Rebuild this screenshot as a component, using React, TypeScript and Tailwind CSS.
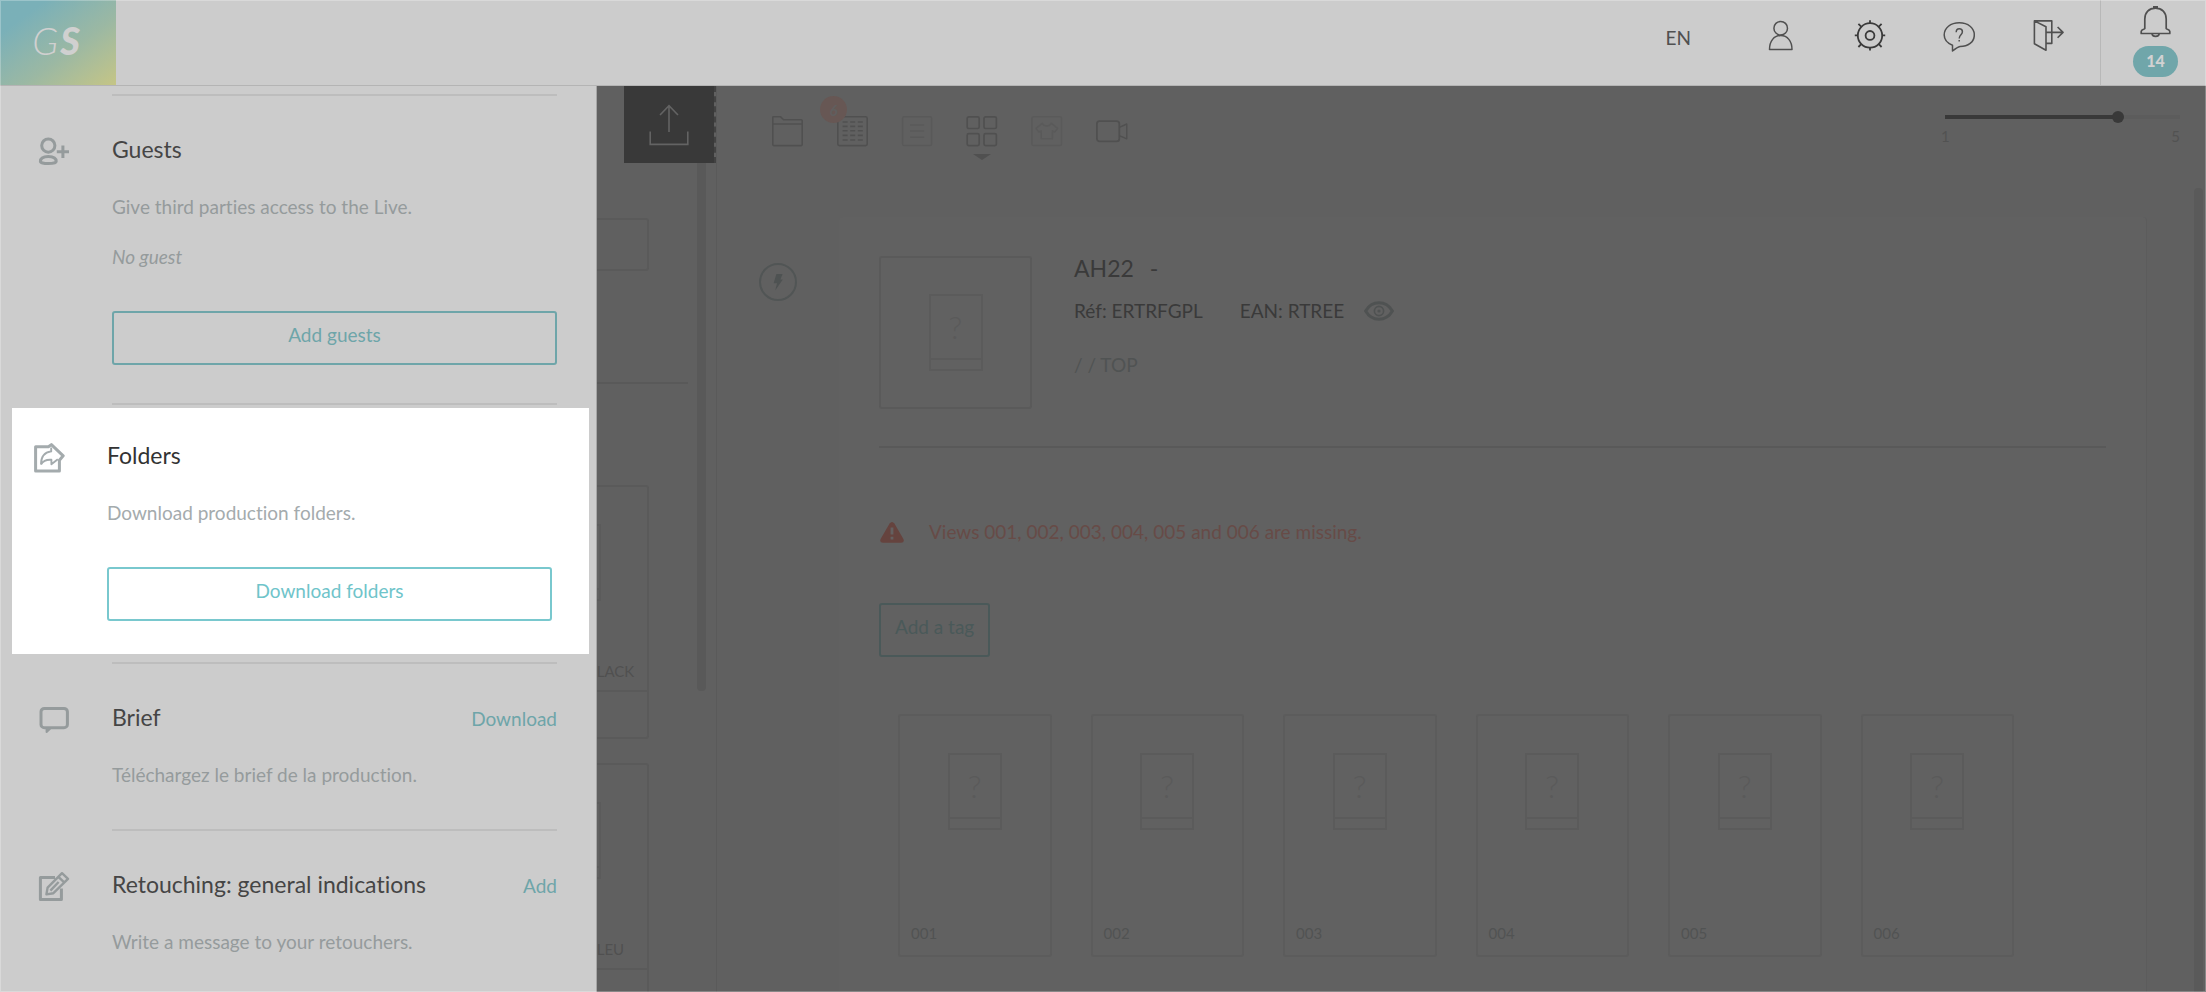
import React from "react";

type IconProps = { className?: string; children: React.ReactNode; width?: number };

function Icon({ className = "", children, width = 2 }: IconProps) {
  return (
    <svg
      viewBox="0 0 32 32"
      className={`size-8 shrink-0 ${className}`}
      fill="none"
      stroke="currentColor"
      strokeWidth={width}
      strokeLinejoin="round"
      aria-hidden="true"
    >
      {children}
    </svg>
  );
}

function Header() {
  return (
    <header className="flex h-[86px] shrink-0 border-b border-[#b4b4b4] bg-[#cccccc] text-[#505050]">
      <a
        href="#home"
        aria-label="Home"
        className="flex w-[116px] items-center justify-center gap-[2px] bg-linear-to-br from-[#7ab0b8] from-20% via-[#9bb8a3] via-60% to-[#c5c585] pr-1 pb-[6px] text-[38px] leading-none text-[#d0d0d0] italic"
      >
        <span className="font-light">G</span>
        <span className="font-black">S</span>
      </a>
      <nav className="ml-auto flex items-start">
        <button type="button" className="mt-6 text-[19px] leading-7">
          EN
        </button>
        <div className="mt-5 mr-9 ml-[74px] flex gap-[57px]">
          <button type="button" aria-label="Account">
            <Icon width={1.5}>
              <circle cx="15.7" cy="8.2" r="6.8" />
              <path d="M4.5 29.5C4.5 21 9 15.6 15.7 15.6S27 21 27 29.5Z" />
            </Icon>
          </button>
          <button type="button" aria-label="Settings" className="text-[#3a3a3a]">
            <Icon width={1.8}>
              <circle cx="16" cy="15.4" r="12.2" />
              <circle cx="16" cy="15.4" r="4.4" />
              <path d="M16 .2v3M16 27.6v3M.8 15.4h3M28.2 15.4h3M4.4 3.8l2.8 2.8M24.8 24.2l2.8 2.8M27.6 3.8l-2.8 2.8M7.2 24.2l-2.8 2.8" />
            </Icon>
          </button>
          <button type="button" aria-label="Help">
            <Icon width={1.5}>
              <path d="M9.5 31V25.2C4 23 1.2 19.5 1.2 15 1.2 8 7.5 2.8 16.3 2.8S31.3 8 31.3 15 25 26.4 17 26.4Q14.5 26.8 9.5 31Z" />
              <path d="M13.2 12.3c0-2.3 1.3-3.5 3.1-3.5s3.1 1.2 3.1 3c0 2.9-3.2 3-3.2 6.6M16.2 20v1.6" />
            </Icon>
          </button>
          <button type="button" aria-label="Log out">
            <Icon width={1.6}>
              <path d="M2.4.9H19.8V23.4H14M2.4.9 14 6.8V30.2L2.4 23.8ZM14 12.4H31M25.6 7l5.4 5.4-5.4 5.4" />
            </Icon>
          </button>
        </div>
        <button
          type="button"
          aria-label="Notifications, 14 unread"
          className="flex h-[85px] w-[106px] flex-col items-center border-l border-[#b8b8b8] pt-1 pl-1"
        >
          <svg viewBox="0 0 31 34" className="h-[34px] w-[31px]" fill="none" stroke="currentColor" strokeWidth="1.7" strokeLinejoin="round" aria-hidden="true">
            <path d="M4.8 24.6V15C4.8 8.5 9 4.2 15.5 4.2S26.2 8.5 26.2 15v9.6c.5.8 3.6.6 3.6 2.9V29.5H1.2V27.5c0-2.3 3.1-2.1 3.6-2.9ZM12 29.5a3.6 2.8 0 0 0 7.2 0M13 2.8h5" />
          </svg>
          <span className="mt-2 flex h-[31px] w-[45px] items-center justify-center rounded-full bg-[#70a6aa] pb-px text-[16px] leading-5 font-black text-[#d2d2d2]">
            14
          </span>
        </button>
      </nav>
    </header>
  );
}

function Rule() {
  return <div className="mr-[39px] ml-[112px] h-[2px] shrink-0 bg-[#bdbdbd]" />;
}

type SectionProps = {
  icon: React.ReactNode;
  title: string;
  text: string;
  action?: string;
  className: string;
  children?: React.ReactNode;
};

function Section({ icon, title, text, action, className, children }: SectionProps) {
  return (
    <section className={`flex shrink-0 ${className}`}>
      <div className="w-[74px] shrink-0 pt-1">{icon}</div>
      <div className="min-w-0 flex-1">
        <div className="flex items-baseline justify-between">
          <h2 className="text-[23px] leading-8">{title}</h2>
          {action && (
            <button type="button" className="text-[19px] leading-7 text-[#6ea5a9]">
              {action}
            </button>
          )}
        </div>
        <p className="mt-7 text-[19px] leading-7">{text}</p>
        {children}
      </div>
    </section>
  );
}

function Drawer() {
  return (
    <aside className="flex w-[597px] shrink-0 flex-col overflow-hidden border-r border-[#a6a6a6] bg-[#cccccc] pt-2 text-[#959b9c]">
      <Rule />
      <Section
        className="pt-[37px] pr-[39px] pb-[38px] pl-[38px] [&_h2]:text-[#454545]"
        title="Guests"
        text="Give third parties access to the Live."
        icon={
          <Icon width={3}>
            <circle cx="10.3" cy="8.6" r="6.6" />
            <path d="M2.4 24.5c0-3.2 3.2-5 7.9-5s7.9 1.8 7.9 5c0 1.2-3.2 2-7.9 2s-7.9-.8-7.9-2ZM18.8 14.8H31M24.9 8.6V21" />
          </Icon>
        }
      >
        <p className="mt-[22px] text-[19px] leading-7 italic">No guest</p>
        <button
          type="button"
          className="mt-10 flex h-[54px] w-full items-center justify-center rounded-[3px] border-2 border-[#6ea5a9] pb-[6px] text-[19px] leading-7 text-[#6ea5a9]"
        >
          Add guests
        </button>
      </Section>
      <Rule />
      <Section
        className="mt-[3px] mr-[7px] mb-2 ml-3 bg-white pt-[31px] pr-[37px] pb-[33px] pl-[21px] text-[#a4abad] [&_h2]:text-[#333333]"
        title="Folders"
        text="Download production folders."
        icon={
          <Icon width={3}>
            <path d="M2.6 3.8H15.4L18.4 1.6 30.2 12.8 26.4 17.2V28H2.6Z" />
            <path
              strokeWidth="1.9"
              d="M8 21.4C8 13.4 11.6 9.2 18.2 8.4V4.4M8 21.4c2.2-3.6 5.6-5 10.4-4.6v4.4l6.4-5"
            />
          </Icon>
        }
      >
        <button
          type="button"
          className="mt-10 flex h-[54px] w-full items-center justify-center rounded-[3px] border-2 border-[#79c8ce] pb-[6px] text-[19px] leading-7 text-[#6fc4ca]"
        >
          Download folders
        </button>
      </Section>
      <Rule />
      <Section
        className="pt-[37px] pr-[39px] pb-10 pl-[38px] [&_h2]:text-[#454545]"
        title="Brief"
        text="Téléchargez le brief de la production."
        action="Download"
        icon={
          <Icon width={3}>
            <rect x="3" y="3.4" width="26.4" height="19.4" rx="3.4" />
            <path d="M8.6 23.8v3.2l3.4-3.2Z" strokeWidth="2" fill="currentColor" />
          </Icon>
        }
      />
      <Rule />
      <Section
        className="pt-[37px] pr-[39px] pb-10 pl-[38px] [&_h2]:text-[#454545]"
        title="Retouching: general indications"
        text="Write a message to your retouchers."
        action="Add"
        icon={
          <Icon width={3}>
            <path d="M17 5.600H2.400V27.400H23.400V16.400" />
            <path d="M9.600 15.600 24 1.200 30 6.800 15.400 21.200 8.400 22.400ZM20.400 4.800l5.800 5.600M12.400 18.600 20.600 10" strokeWidth="2.400" />
          </Icon>
        }
      />
    </aside>
  );
}

function Placeholder({ mark = "?" }: { mark?: string }) {
  return (
    <div className="flex h-[77px] w-[54px] shrink-0 flex-col border-2 border-[#5b5b5b] text-[#5a5a5a]">
      <div className="flex flex-1 items-center justify-center border-b-2 border-[#5b5b5b] text-[32px] leading-none font-light">{mark}</div>
      <div className="h-[9px]" />
    </div>
  );
}

function StripCard({ color }: { color: string }) {
  return (
    <div className="mr-[39px] flex h-[254px] w-[150px] shrink-0 flex-col items-center rounded-[3px] border-2 border-[#5a5a5a] pt-[37px]">
      <Placeholder mark="" />
      <p className="mt-[60px] w-full pl-[86px]">{color}</p>
      <div className="mt-[9px] h-[2px] w-full bg-[#5a5a5a]" />
    </div>
  );
}

function ProductStrip() {
  return (
    <div className="flex w-[120px] shrink-0 flex-col items-end overflow-hidden border-r border-[#5a5a5a] text-[15px] leading-5 text-[#505050]">
      <button
        type="button"
        aria-label="Upload"
        className="flex h-[77px] w-[92px] shrink-0 items-center justify-center border-r-2 border-dashed border-[#424242] bg-[#393939] bg-clip-padding text-[#636363]"
      >
        <svg viewBox="0 0 40 42" className="h-[42px] w-10" fill="none" stroke="currentColor" strokeWidth="1.6" aria-hidden="true">
          <path d="M1.2 27.4V40.4H38.8V27.4M20 28V1.6M11 11 20 1.6 29 11" />
        </svg>
      </button>
      <div className="flex min-h-0 flex-1 items-start gap-[9px] pr-[10px]">
        <div className="flex flex-col items-end">
          <div className="mt-[55px] mr-[39px] h-[53px] w-[150px] rounded-[3px] border-2 border-[#5a5a5a]" />
          <div className="mt-[111px] mb-[101px] h-[2px] w-[190px] bg-[#595959]" />
          <StripCard color="BLACK" />
          <div className="h-6" />
          <StripCard color="BLEU" />
        </div>
        <div className="h-[528px] w-[9px] shrink-0 rounded-b bg-[#595959]" />
      </div>
    </div>
  );
}

function Toolbar() {
  return (
    <div className="flex h-[131px] shrink-0 items-start justify-between pt-[25px] pr-[26px] pl-[54px] text-[#505050]">
      <div className="mt-[5px] flex gap-[33px]">
        <button type="button" aria-label="Folders">
          <Icon width={1.6}>
            <path d="M1.8 1.6q0-1 1-1H9.4l3.2 3.2H30.2q1 0 1 1V28.6q0 1-1 1H2.8q-1 0-1-1ZM1.8 8H31.2" />
          </Icon>
        </button>
        <button type="button" aria-label="Table, 6 alerts" className="relative">
          <Icon width={1.6}>
            <rect x="1.8" y=".8" width="29.4" height="28.8" rx="1.6" />
            <path d="M6.600 6h5M14.200 6h5M21.800 6h5M6.600 10.400h5M14.200 10.400h5M21.800 10.400h5M6.600 14.800h5M14.200 14.800h5M21.800 14.800h5M6.600 19.400h5M14.200 19.400h5M21.800 19.400h5M6.600 24h5M14.200 24h5M21.800 24h5" />
          </Icon>
          <span className="absolute -top-5 -left-4 flex size-[27px] items-center justify-center rounded-full bg-[#675754] text-[15px] leading-5 font-bold text-[#605f5f] italic">
            6
          </span>
        </button>
        <button type="button" aria-label="List" className="text-[#595959]">
          <Icon width={1.5}>
            <rect x="1.6" y=".8" width="29" height="28.8" rx="1.6" />
            <path d="M9.2 9h14M9.2 15h14M9.2 21.2h14" />
          </Icon>
        </button>
        <button type="button" aria-label="Grid" className="relative">
          <Icon width={1.7}>
            <rect x="1.2" y=".9" width="12" height="11.6" rx="1.6" />
            <rect x="18" y=".9" width="12.4" height="11.6" rx="1.6" />
            <rect x="1.2" y="17.6" width="12" height="12" rx="1.6" />
            <rect x="18" y="17.6" width="12.4" height="12" rx="1.6" />
          </Icon>
          <svg viewBox="0 0 18 6" className="absolute top-[38px] left-[7px] h-[6px] w-[18px] fill-current" aria-hidden="true">
            <path d="M0 0H18L9 6Z" />
          </svg>
        </button>
        <button type="button" aria-label="Garments" className="text-[#5a5a5a]">
          <Icon width={1.5}>
            <rect x=".9" y=".8" width="29.6" height="28.8" rx="1.6" />
            <path d="M11.400 7.200 5 12.400 7.800 16l2.400-1.200v8h11.200v-8l2.400 1.200 2.800-3.600L20.200 7.200Q19 10 15.800 10T11.400 7.200Z" />
          </Icon>
        </button>
        <button type="button" aria-label="Video">
          <Icon width={1.8}>
            <rect x=".9" y="5.2" width="22.4" height="20.2" rx="2.6" />
            <path d="M23.3 11.4 30.8 8V22.8L23.3 19.6" strokeWidth="1.4" />
          </Icon>
        </button>
      </div>
      <div className="w-[239px]">
        <input
          type="range"
          min={1}
          max={5}
          defaultValue={4}
          aria-label="Items per row"
          className="ml-1 block h-3 w-[235px] appearance-none bg-[linear-gradient(90deg,#393939_75%,#5c5c5c_75%)] bg-[length:100%_4px] bg-center bg-no-repeat [&::-webkit-slider-thumb]:size-3 [&::-webkit-slider-thumb]:appearance-none [&::-webkit-slider-thumb]:rounded-full [&::-webkit-slider-thumb]:bg-[#393939]"
        />
        <div className="mt-[3px] flex justify-between text-[15px] leading-5 text-[#525252]">
          <span>1</span>
          <span>5</span>
        </div>
      </div>
    </div>
  );
}

const views = ["001", "002", "003", "004", "005", "006"];

function ProductCard() {
  return (
    <article className="mr-[59px] flex-1 rounded-t-sm border-r border-[#5c5c5c] bg-[#616161] px-10 pt-[39px]">
      <div className="flex gap-[42px]">
        <div className="flex size-[153px] shrink-0 items-center justify-center rounded-[3px] border-2 border-[#5a5a5a]">
          <Placeholder />
        </div>
        <div className="text-[#3a3a3a]">
          <h1 className="flex gap-4 text-[23px] leading-6">
            <span>AH22</span>
            <span>-</span>
          </h1>
          <div className="mt-[17px] flex items-center text-[19px] leading-7">
            <span>Réf: ERTRFGPL</span>
            <span className="ml-[37px]">EAN: RTREE</span>
            <button type="button" aria-label="Show details" className="ml-5 text-[#4f5252]">
              <svg viewBox="0 0 30 20" className="h-5 w-[30px]" fill="none" stroke="currentColor" aria-hidden="true">
                <path d="M1.600 10C5 4.200 9.600 1.800 15 1.800S25 4.200 28.400 10C25 15.800 20.400 18.200 15 18.200S5 15.800 1.600 10Z" strokeWidth="3" />
                <circle cx="15" cy="10" r="4.600" strokeWidth="1.600" />
                <circle cx="15" cy="10" r="1.600" fill="currentColor" stroke="none" />
              </svg>
            </button>
          </div>
          <p className="mt-[26px] text-[19px] leading-7 text-[#505353]">/ / TOP</p>
        </div>
      </div>
      <div className="mt-[37px] h-[2px] bg-[#595959]" />
      <div className="mt-[70px] flex items-center gap-[25px] pl-px text-[19px] leading-7 text-[#674b47]">
        <svg viewBox="0 0 24 21" className="h-[21px] w-6" aria-hidden="true">
          <path d="M9.600 1.600Q12-1.400 14.400 1.600L23.400 17Q24.800 20.600 21 20.800H3Q-.8 20.600.6 17Z" fill="#65433e" />
          <path d="M12 5.600V12.400M12 14.800V17.600" stroke="#646060" strokeWidth="2.800" />
        </svg>
        <p>Views 001, 002, 003, 004, 005 and 006 are missing.</p>
      </div>
      <button
        type="button"
        className="mt-[57px] flex h-[54px] items-center justify-center rounded-[3px] border-2 border-[#4a5959] px-[14px] pb-[6px] text-[19px] leading-7 text-[#4a5959]"
      >
        Add a tag
      </button>
      <ul className="mt-[57px] mr-[92px] ml-[19px] grid grid-cols-6 gap-[39px]">
        {views.map((view) => (
          <li key={view} className="flex h-[243px] flex-col items-center rounded-[3px] border-2 border-[#5c5c5c] pt-[37px] pb-3">
            <Placeholder />
            <p className="mt-auto w-full pl-[11px] text-[15px] leading-5 text-[#515353]">{view}</p>
          </li>
        ))}
      </ul>
    </article>
  );
}

export default function App() {
  return (
    <div className="relative flex h-screen flex-col overflow-hidden bg-[#606060] font-['Lato',sans-serif] [font-variant-ligatures:none]">
      <Header />
      <div className="flex min-h-0 flex-1">
        <Drawer />
        <ProductStrip />
        <main className="relative flex min-w-0 flex-1 flex-col overflow-hidden">
          <Toolbar />
          <div className="flex flex-1">
            <div className="flex w-[122px] shrink-0 items-start justify-center pt-[46px]">
              <button
                type="button"
                aria-label="Quick actions"
                className="flex size-[38px] items-center justify-center rounded-full border-2 border-[#515555] text-[#4e5252]"
              >
                <svg viewBox="0 0 10 18" className="h-[18px] w-[10px] fill-current" aria-hidden="true">
                  <path d="M3.400 1H9.600L7.400 6.400H9.800L2.200 17.600 4 10.200H.6Z" />
                </svg>
              </button>
            </div>
            <ProductCard />
          </div>
          <div className="absolute top-[102px] right-[3px] bottom-0 w-[9px] rounded-t bg-[#5a5a5a]" />
        </main>
      </div>
      <div className="pointer-events-none absolute inset-0 border border-white/25" />
    </div>
  );
}
